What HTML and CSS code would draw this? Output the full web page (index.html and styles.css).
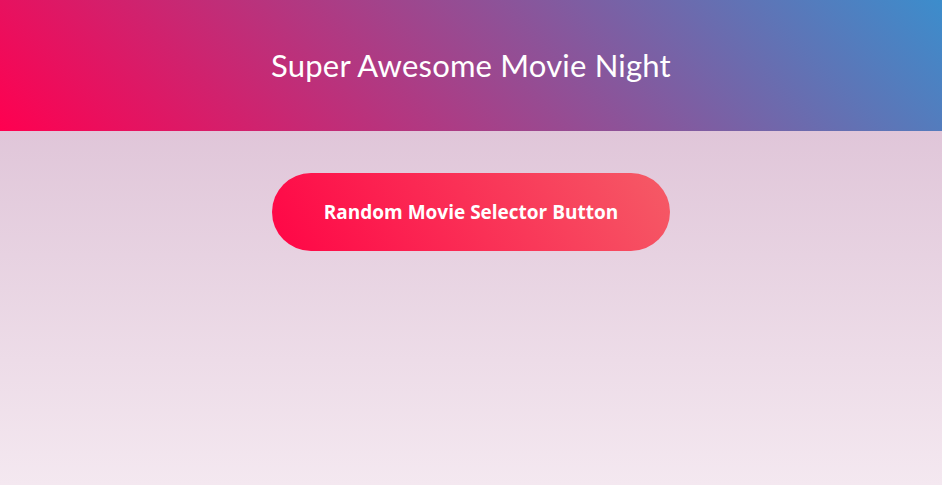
FILE: index.html
```html
<!DOCTYPE html>
<html>
<head>
<meta charset="utf-8">
<link rel="stylesheet" href="styles.css">
</head>
<body>
<header class="hero">
  <h1 class="title">Super Awesome Movie Night</h1>
</header>
<main class="content">
  <button class="pick-btn">Random Movie Selector Button</button>
</main>
</body>
</html>
```
FILE: styles.css
```css
html, body {
  margin: 0;
  padding: 0;
  height: 100%;
}
body {
  display: flex;
  flex-direction: column;
  background: #f4e8f0;
}
.hero {
  height: 131px;
  flex-shrink: 0;
  display: flex;
  align-items: center;
  justify-content: center;
  background: linear-gradient(45deg, #ff0050 0%, #3c8dcc 100%);
}
.title {
  margin: 0;
  color: #fff;
  font-family: "Lato", sans-serif;
  font-weight: 400;
  font-size: 31px;
  letter-spacing: 0.2px;
  padding-bottom: 2px;
}
.content {
  flex: 1;
  display: flex;
  justify-content: center;
  align-items: flex-start;
  padding-top: 42px;
  background: linear-gradient(to bottom, #e0c6d9 0%, #f4e8f0 100%);
}
.pick-btn {
  width: 398px;
  height: 78px;
  border: none;
  border-radius: 40px;
  background: linear-gradient(60deg, #ff0546 0%, #f55b66 100%);
  color: #fff;
  font-family: "Open Sans", sans-serif;
  font-weight: 700;
  font-size: 19px;
  cursor: pointer;
}
```
